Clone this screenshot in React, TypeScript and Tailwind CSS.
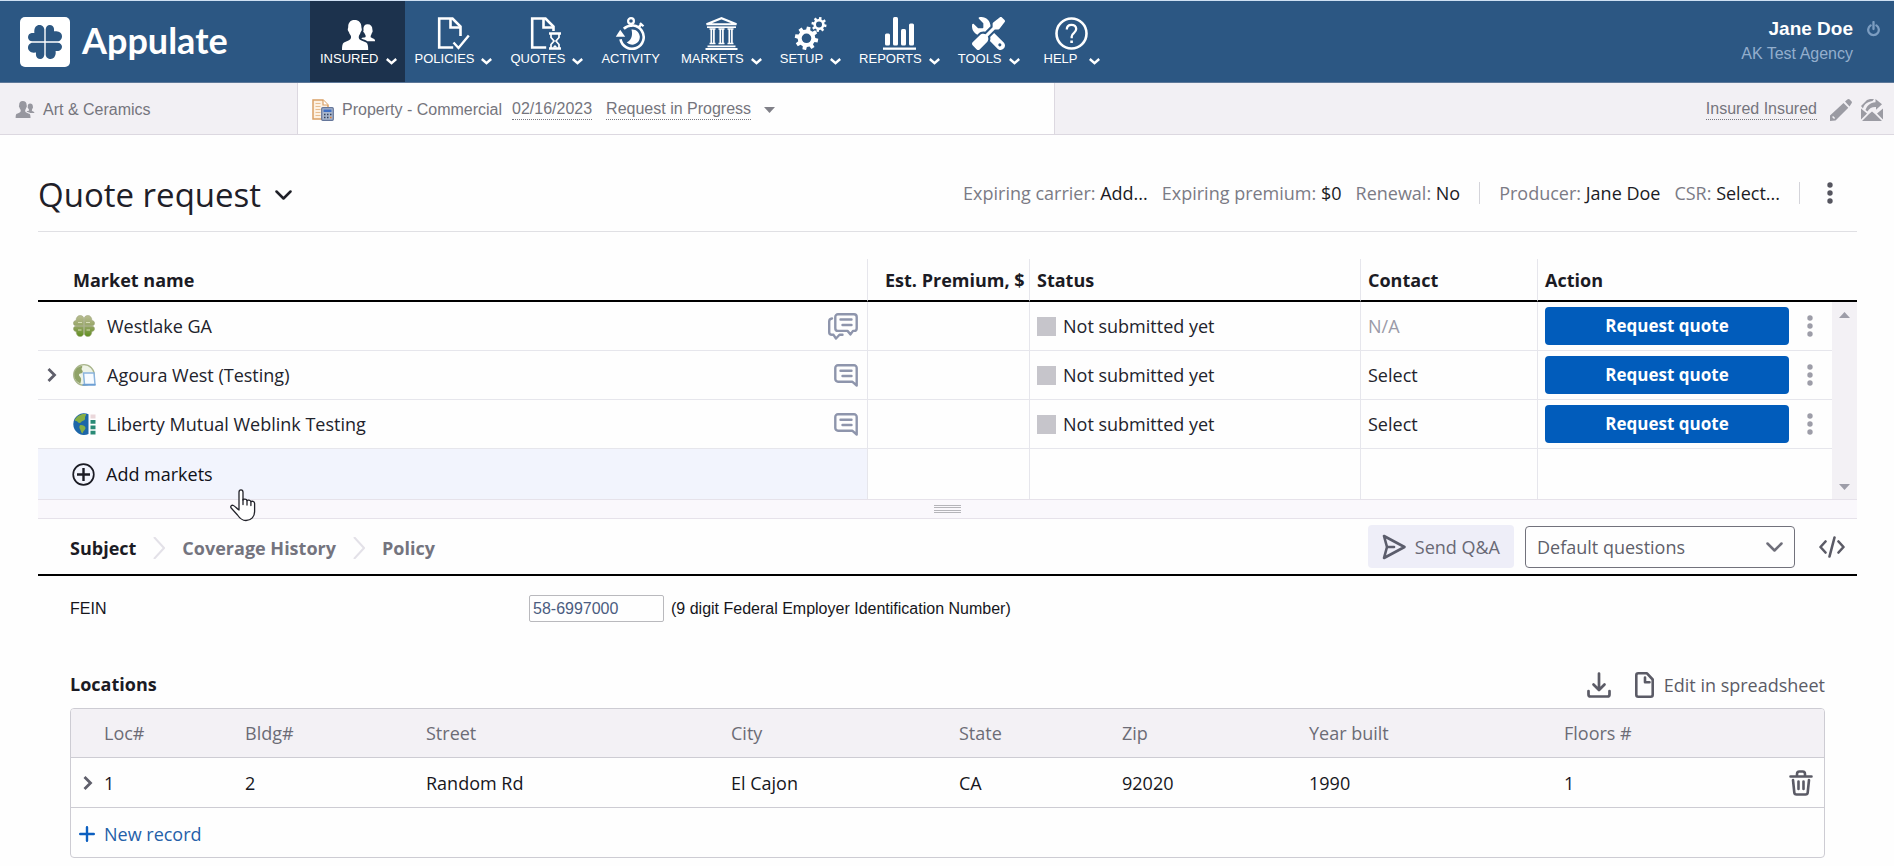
import type { ReactNode } from 'react';
import { FaScrewdriverWrench } from 'react-icons/fa6';

const SANS = "font-['Liberation_Sans',Arial,sans-serif]";
const UI = "font-['Open_Sans','Noto_Sans',sans-serif]";

/* ---------- drawing helpers ---------- */

function gearPath(cx: number, cy: number, teeth: number, outer: number, root: number, hole: number) {
  const step = (Math.PI * 2) / teeth;
  const points: string[] = [];
  for (let i = 0; i < teeth; i++) {
    const a = i * step + step / 4;
    const spots: [number, number][] = [
      [root, -0.3],
      [outer, -0.2],
      [outer, 0.2],
      [root, 0.3],
    ];
    for (const [r, k] of spots) {
      const t = a + k * step;
      points.push(`${(cx + r * Math.cos(t)).toFixed(2)} ${(cy + r * Math.sin(t)).toFixed(2)}`);
    }
  }
  return `M${points.join('L')}ZM${cx - hole} ${cy}a${hole} ${hole} 0 1 0 ${hole * 2} 0a${hole} ${hole} 0 1 0 ${-hole * 2} 0Z`;
}

function Bust({ className }: { className: string }) {
  return (
    <svg viewBox="0 0 33 30" className={className} fill="currentColor" aria-hidden="true">
      <path d="M12.500 0c4.300 0 6.900 2.700 6.900 7 0 1.200.6 1.600.4 2.900-.2 1.200-1 1.500-1.300 2.600-.4 1.700-1.300 2.600-1.600 3.500-.3 1.200-.1 2.600.5 3.200 1.800 1.500 4.600 2.100 6.800 3.300 1.700 1 2 3.500 2 7.500H0c0-4 .3-6.500 2-7.500 2.200-1.200 4.800-1.800 6.300-3.300.7-.7.900-2 .6-3.200-.3-.9-1.400-1.800-1.800-3.500-.3-1.100-1.100-1.400-1.300-2.600-.2-1.300.4-1.700.4-2.900C6.200 2.700 8.400 0 12.500 0Z" />
      <path d="M25.500 4.200c3.200 0 4.900 2 4.900 5.300 0 .9.400 1.200.2 2.100-.1.800-.6 1-.9 1.800-.3 1.200-.9 1.800-1 2.500-.2.900 0 1.300.5 1.700 1.200.8 2.500 1 3.200 1.600.6.500.6 1 .6 2h-7.600c-1.300-1.200-4.200-1.700-6-2.700-.3-.8 3.300-1 3.900-1.300.6-.5.400-1.200.2-2-.2-.7-.8-1-1.100-2.100l-1.200-1.300c.5-1 .4-2 .2-3 0-2.800 1.500-4.600 4.100-4.600Z" />
    </svg>
  );
}

function NavChevron() {
  return (
    <svg viewBox="0 0 11 7" className="mt-1 h-[7px] w-[11px]" fill="none" stroke="#fff" strokeWidth="2.400" aria-hidden="true">
      <path d="M.8 1l4.700 4.200L10.200 1" />
    </svg>
  );
}

function Chevron({ className }: { className: string }) {
  return (
    <svg viewBox="0 0 17 10" className={className} fill="none" stroke="currentColor" strokeWidth="2.500" strokeLinecap="round" strokeLinejoin="round" aria-hidden="true">
      <path d="M1.500 1.500l7 7 7-7" />
    </svg>
  );
}

function RightChevron() {
  return (
    <svg viewBox="0 0 10 14" className="h-[14px] w-[10px]" fill="none" stroke="#5f5f6b" strokeWidth="2.800" aria-hidden="true">
      <path d="M1.500 1l6 6-6 6" />
    </svg>
  );
}

function Dots({ className }: { className: string }) {
  return (
    <svg viewBox="0 0 6 22" className={className} fill="currentColor" aria-hidden="true">
      <circle cx="3" cy="3" r="2.700" />
      <circle cx="3" cy="11" r="2.700" />
      <circle cx="3" cy="19" r="2.700" />
    </svg>
  );
}

/* ---------- navigation icons ---------- */

const svgNav = 'h-[33px] w-[33px]';

const PoliciesIcon = (
  <svg viewBox="0 0 33 33" className={svgNav} fill="none" stroke="#fff">
    <path d="M23.500 19V9.500L15.500 1.500H2.200v29h14" strokeWidth="2.600" />
    <path d="M13.500 1.500v9h10" strokeWidth="2.600" />
    <path d="M16.500 25.500l5 5.500L31.800 18.500" strokeWidth="2.400" />
  </svg>
);

const QuotesIcon = (
  <svg viewBox="0 0 33 33" className={svgNav} fill="none" stroke="#fff">
    <path d="M23.500 14V9.500L15.500 1.500H2.200v29h14" strokeWidth="2.600" />
    <path d="M13.500 1.500v9h10" strokeWidth="2.600" />
    <path d="M19 16.500h12M19 31.500h12" strokeWidth="2.400" />
    <path d="M21 17v3.500l3 3.500-3 3.500V31M29 17v3.500L26 24l3 3.500V31" strokeWidth="1.700" />
    <path d="M22.500 30.500l2.500-2.500 2.500 2.500Z" fill="#fff" stroke="none" />
  </svg>
);

const ActivityIcon = (
  <svg viewBox="0 0 33 33" className={svgNav} fill="none" stroke="#fff">
    <circle cx="17" cy="4" r="2.900" strokeWidth="2.200" />
    <path d="M17 7v3M24.500 10.500l3-3.300" strokeWidth="2.600" />
    <path d="M26 6l3.500 3.300" strokeWidth="2.200" />
    <path d="M9.800 11.800a11.700 11.700 0 1 1-3.300 10.500" strokeWidth="2.600" />
    <path d="M1.800 19.800l4.400-7 5 7Z" fill="#fff" stroke="none" />
    <path d="M17.500 12.500a7.600 7.600 0 1 1-4.800 12.800c4.500-1.600 6.300-6.800 4.800-12.800Z" fill="#fff" stroke="none" />
  </svg>
);

const MarketsIcon = (
  <svg viewBox="0 0 33 33" className={svgNav} fill="none" stroke="#fff">
    <path d="M1.500 7.200L16.500 1.200l15 6Z" strokeWidth="2" />
    <path d="M2 10.200h29" strokeWidth="1.700" />
    <path d="M4.500 12h6M13.500 12h6M22.500 12h6M4.500 26.500h6M13.500 26.500h6M22.500 26.500h6" strokeWidth="1.500" />
    <path d="M6.300 12v14.500M8.900 12v14.500M15.300 12v14.500M17.900 12v14.500M24.300 12v14.500M26.900 12v14.500" strokeWidth="1.700" />
    <path d="M2.500 29.300h28M.5 32h32" strokeWidth="1.800" />
  </svg>
);

const SetupIcon = (
  <svg viewBox="0 0 33 33" className={svgNav} fill="#fff" fillRule="evenodd">
    <path d={gearPath(12.5, 21.3, 8, 11.8, 8.8, 4.8)} />
    <path d={gearPath(25, 7.5, 8, 7.6, 5.6, 3)} />
  </svg>
);

const ReportsIcon = (
  <svg viewBox="0 0 33 33" className={svgNav} fill="#fff">
    <rect x="2" y="16.500" width="5" height="12" rx="1.500" />
    <rect x="10" y="0" width="5" height="28.500" rx="1.500" />
    <rect x="18" y="12" width="5" height="16.500" rx="1.500" />
    <rect x="26" y="6.500" width="5" height="22" rx="1.500" />
    <rect x="0" y="30.500" width="33" height="2.300" />
  </svg>
);

const HelpIcon = (
  <svg viewBox="0 0 33 33" className={svgNav} fill="none" stroke="#fff">
    <circle cx="16.500" cy="16.500" r="15" strokeWidth="2.600" />
    <path d="M11.800 12.600c0-3 2-4.800 4.700-4.800s4.700 1.700 4.700 4.300c0 3.800-4.500 4-4.500 7.300v1.800" strokeWidth="2.300" />
    <path d="M15.300 23.500h2.600v2.500h-2.600Z" fill="#fff" stroke="none" />
  </svg>
);

type NavItem = { label: string; icon: ReactNode; menu: boolean; active?: boolean; wide?: boolean };

const NAV: NavItem[] = [
  { label: 'INSURED', icon: <div className="flex h-[33px] items-end"><Bust className="h-[30px] w-[33px]" /></div>, menu: true, active: true },
  { label: 'POLICIES', icon: PoliciesIcon, menu: true },
  { label: 'QUOTES', icon: QuotesIcon, menu: true },
  { label: 'ACTIVITY', icon: ActivityIcon, menu: false },
  { label: 'MARKETS', icon: MarketsIcon, menu: true },
  { label: 'SETUP', icon: SetupIcon, menu: true },
  { label: 'REPORTS', icon: ReportsIcon, menu: true },
  { label: 'TOOLS', icon: <FaScrewdriverWrench className="h-[33px] w-[33px] -scale-x-100" />, menu: true },
  { label: 'HELP', icon: HelpIcon, menu: true, wide: true },
];

/* ---------- header ---------- */

function Logo() {
  return (
    <a href="#home" className="flex w-[310px] items-center gap-3 pl-5 text-white">
      <svg viewBox="0 0 50 50" className="h-[50px] w-[50px]" aria-hidden="true">
        <rect width="50" height="50" rx="5" fill="#fff" />
        <g fill="#2c5782">
          {[0, 90, 180, 270].map((deg) => (
            <path
              key={deg}
              transform={`rotate(${deg} 25 25)`}
              d="M24.300 24.300H12.500C9.800 24.300 8 22.500 8 20.200c0-2.200 1.600-4 3.700-4.200.8-.1 2.700 0 2.700 0s-.2-1.400-.1-2.300C14.600 10.200 16.600 8 19.200 8c2.800 0 5.100 1.900 5.100 4.600Z"
            />
          ))}
        </g>
      </svg>
      <span className="pb-1 font-['Lato',sans-serif] text-[36px] leading-10 font-bold">Appulate</span>
    </a>
  );
}

function Header() {
  return (
    <header className={`flex h-[83px] border-t border-b border-t-[#cfe0f3] border-b-[#5d7899] bg-[#2c5783] ${SANS}`}>
      <Logo />
      <nav className="flex text-[13px] text-white">
        {NAV.map((item) => (
          <a
            key={item.label}
            href={`#${item.label.toLowerCase()}`}
            className={`flex flex-col items-center pt-4 ${item.wide ? 'pl-4' : 'pl-[10px]'} ${item.menu ? 'pr-2' : 'pr-[11px]'} ${item.active ? 'bg-[#1c324d]' : ''}`}
          >
            {item.icon}
            <span className={`flex items-center leading-[18px] ${item.wide ? 'gap-[11px]' : 'gap-[7px]'}`}>
              {item.label}
              {item.menu && <NavChevron />}
            </span>
          </a>
        ))}
      </nav>
      <div className="ml-auto flex gap-[14px] pt-4 pr-[14px]">
        <div className="text-right">
          <div className="text-[19px] leading-6 font-bold text-white">Jane Doe</div>
          <div className="text-base leading-[26px] text-[#93aecd]">AK Test Agency</div>
        </div>
        <button type="button" aria-label="Log out" className="mt-1 h-4">
          <svg viewBox="0 0 13 16" className="h-4 w-[13px]" fill="none" stroke="#7c9dc1" strokeWidth="2.300" strokeLinecap="round">
            <path d="M6.500 1v7M3.600 4.400a5.300 5.300 0 1 0 5.800 0" />
          </svg>
        </button>
      </div>
    </header>
  );
}

function ContextBar() {
  const dotted = 'border-b border-dotted border-[#77777f] leading-5';
  return (
    <div className={`flex h-[52px] items-stretch border-b border-[#dcd8e0] bg-[#f2f0f4] text-base text-[#75757d] ${SANS}`}>
      <a href="#insured" className="flex w-[298px] items-center gap-2 border-r border-[#dcd8e0] pt-[2px] pl-[15px]">
        <Bust className="h-[17px] w-5 text-[#97979f]" />
        Art &amp; Ceramics
      </a>
      <div className="flex w-[757px] items-center border-r border-[#dcd8e0] bg-[#fefefe] pt-[2px] pl-[14px]">
        <svg viewBox="0 0 22 22" className="mr-2 h-[22px] w-[22px]" aria-hidden="true">
          <path d="M1 1h10l5 5v14H1Z" fill="#fdf1e2" stroke="#d9a066" strokeWidth="1.500" />
          <path d="M11 1v5h5" fill="#fff" stroke="#d9a066" strokeWidth="1.200" />
          <path d="M3.500 4.500h5M3.500 7.500h5M3.500 10.500h5M3.500 13.500h5M3.500 16.500h5" stroke="#e8bd90" />
          <rect x="9.700" y="8.700" width="11.600" height="12.600" rx="1" fill="#a9b6cc" stroke="#65769a" strokeWidth="1.200" />
          <rect x="11.500" y="10.500" width="8" height="2.500" fill="#3f6fc4" />
          <path d="M12 15.500h1.500M15 15.500h1.500M18 15.500h1.500M12 18.500h1.500M15 18.500h1.500" stroke="#33405c" strokeWidth="1.600" />
          <path d="M18 18.500h1.500" stroke="#e07b2e" strokeWidth="1.600" />
        </svg>
        <span>Property - Commercial</span>
        <a href="#date" className={`ml-[10px] ${dotted}`}>02/16/2023</a>
        <a href="#status" className={`ml-[14px] ${dotted}`}>Request in Progress</a>
        <svg viewBox="0 0 11 6" className="ml-[13px] h-[6px] w-[11px]" fill="#808088" aria-hidden="true">
          <path d="M0 0h11L5.500 6Z" />
        </svg>
      </div>
      <div className="ml-auto flex items-center pt-[2px] pr-[11px]">
        <a href="#contact" className={`mr-[13px] ${dotted}`}>Insured Insured</a>
        <button type="button" aria-label="Edit insured" className="mr-[9px]">
          <svg viewBox="0 0 22 22" className="h-[22px] w-[22px]" fill="#9b9ba3">
            <path d="M0 22v-5.500L13.500 4l4.800 4.800L5.500 21.500ZM15 2.600L17.300.6c.8-.7 1.700-.7 2.400 0l1.700 1.700c.7.8.7 1.600 0 2.300L19.500 7.400Z" />
            <path d="M2.600 17.500l2 2" stroke="#f2f0f4" strokeWidth="1.500" />
          </svg>
        </button>
        <button type="button" aria-label="Share by mail">
          <svg viewBox="0 0 22 22" className="h-[22px] w-[22px]" fill="#9b9ba3">
            <path d="M0 9.500l6 5L0 20.500ZM22 9.500l-6 5 6 6ZM1 22l6.500-6.500L11 12.500l3.500 3L21 22Z" />
            <path d="M0 7L6 1l3-1h4l-1.500 2C6 2.800 3 5.500 2 9.500ZM14.500 0L21 5.200l-6 5.600V8c-4-.2-6.500 1-8.500 4.500L4.500 11C6 6.500 9 3.800 14.500 3.200Z" />
          </svg>
        </button>
      </div>
    </div>
  );
}

/* ---------- quote request ---------- */

function Fact({ name, value }: { name: string; value: string }) {
  return (
    <div className="whitespace-nowrap text-[#7b7b85]">
      {name}: <button type="button" className="text-[#1b1b24]">{value}</button>
    </div>
  );
}

function TitleRow() {
  return (
    <div className="flex h-[97px] items-center border-b border-[#e0e0e4] pt-5 text-[#1f2028]">
      <h1 className="pt-1 text-[33px] leading-10">Quote request</h1>
      <button type="button" aria-label="Switch view" className="mt-1 ml-[14px]">
        <Chevron className="h-[10px] w-[17px]" />
      </button>
      <div className="ml-auto flex items-center gap-[14px] pr-6 text-[18px] leading-6">
        <Fact name="Expiring carrier" value="Add..." />
        <Fact name="Expiring premium" value="$0" />
        <Fact name="Renewal" value="No" />
        <span className="mx-[5px] h-[22px] border-l border-[#d4d4da]" />
        <Fact name="Producer" value="Jane Doe" />
        <Fact name="CSR" value="Select..." />
        <span className="mx-[5px] h-[22px] border-l border-[#d4d4da]" />
        <button type="button" aria-label="More actions" className="ml-2">
          <Dots className="h-[22px] w-[6px] text-[#55555f]" />
        </button>
      </div>
    </div>
  );
}

function ChatIcon() {
  return (
    <svg viewBox="0 0 24 23" className="h-[23px] w-6" fill="none" stroke="#8e95ac" strokeWidth="2.400" strokeLinejoin="round" strokeLinecap="round">
      <path d="M4 1.200h16a2.700 2.700 0 0 1 2.700 2.700v17.600l-4.500-3.800H4a2.700 2.700 0 0 1-2.700-2.700V3.900A2.700 2.700 0 0 1 4 1.200Z" />
      <path d="M6.500 6.800h11M8.500 12h9" />
    </svg>
  );
}

function ChatsIcon() {
  return (
    <svg viewBox="0 0 30 27" className="h-[27px] w-[30px]" fill="none" stroke="#8e95ac" strokeWidth="2.400" strokeLinejoin="round" strokeLinecap="round">
      <path d="M10 1.200h16a2.700 2.700 0 0 1 2.700 2.700v11.300a2.700 2.700 0 0 1-2.700 2.700h-1l-2.500 3.500-3-3.500H10a2.700 2.700 0 0 1-2.700-2.700V3.900A2.700 2.700 0 0 1 10 1.200Z" />
      <path d="M12.500 6.500h11M14.500 12h9" />
      <path d="M4 5.500c-1.700.2-2.800 1.400-2.800 2.900v10.800c0 1.600 1.200 2.600 2.800 2.600h1.500L8 25.500l3.500-3.700h3" />
    </svg>
  );
}

function CloverIcon() {
  return (
    <svg viewBox="0 0 22 22" className="h-[22px] w-[22px]" aria-hidden="true">
      <defs>
        <linearGradient id="clover" x1="0" y1="0" x2="0" y2="1">
          <stop offset="0" stopColor="#b9bd92" />
          <stop offset=".5" stopColor="#96a566" />
          <stop offset="1" stopColor="#5f8f1f" />
        </linearGradient>
      </defs>
      <path d="M10.700 10.700H3C1.300 10.700.5 9.600.5 8.200c0-1.600 1-2.600 2.600-2.600C3 2.500 4.800.5 7.200.5c2 0 3.500 1.200 3.500 3.200ZM11.300 10.700H19c1.700 0 2.500-1.100 2.500-2.500 0-1.600-1-2.600-2.600-2.600 0-3.100-1.700-5.100-4.100-5.100-2 0-3.500 1.200-3.500 3.200ZM10.700 11.300H3c-1.700 0-2.500 1.100-2.500 2.500 0 1.600 1 2.600 2.600 2.600 0 3.100 1.700 5.100 4.100 5.100 2 0 3.500-1.200 3.500-3.200ZM11.300 11.300H19c1.700 0 2.500 1.100 2.500 2.500 0 1.600-1 2.600-2.600 2.600 0 3.100-1.700 5.100-4.100 5.100-2 0-3.500-1.200-3.500-3.200Z" fill="url(#clover)" stroke="#9aa277" strokeWidth=".6" />
      <path d="M5 7.500h4M13 7.500h4M5 15h3.500M13.500 15H17" stroke="#d7deb8" strokeWidth="1.200" />
    </svg>
  );
}

function GlobeWindowIcon() {
  return (
    <svg viewBox="0 0 23 22" className="h-[22px] w-[23px]" aria-hidden="true">
      <circle cx="11" cy="11" r="10.300" fill="#eef3e6" stroke="#a9b58c" strokeWidth="1.300" />
      <path d="M2.500 6C4 3.500 6.500 2.200 9 2c1 1-.5 2-.5 3s2 2 1 3.500-3 .5-3.500 2 1.500 2 2 4-.5 3.500-.5 5C3.800 18 1.200 15 1.200 11c0-2 .5-3.500 1.300-5Z" fill="#8fa267" />
      <path d="M10.500 9h10.500l1 11.500H11.500Z" fill="#f7fbff" stroke="#8bb4dd" strokeWidth="1.500" />
      <path d="M9.500 20.800h13" stroke="#6d9fd4" strokeWidth="1.800" />
    </svg>
  );
}

function GlobeFlagIcon() {
  return (
    <svg viewBox="0 0 23 22" className="h-[22px] w-[23px]" aria-hidden="true">
      <path d="M15.500 1.200V21A10.700 10.700 0 0 1 .3 11 10.700 10.700 0 0 1 15.500 1.200Z" fill="#1d66a8" />
      <path d="M5 3c2.500-1.800 5-2.300 8-2 .5 1.500-1.500 2.500-1 4s-1 2.500-2.500 3S8 10 6.500 10 4.500 8 3 8s-1.500-1-.8-2S4 3.800 5 3ZM8 12c2 0 4.500 1 4.500 3S10 18 9.500 20.500C7.500 19 8 17.500 7 16s-.8-4 1-4Z" fill="#86ae45" />
      <path d="M17.500 1.500h5v4h-5Z" fill="#ead7da" />
      <path d="M17.500 7h5v3.800h-5ZM17.500 12.400h5v3.800h-5ZM17.500 17.800h5V21.600h-5Z" fill="#2a8a76" />
    </svg>
  );
}

function ScrollTrack() {
  return (
    <div className="flex h-full flex-col items-center justify-between pt-[10px] pb-[9px]">
      <svg viewBox="0 0 11 6" className="h-[6px] w-[11px]" fill="#9d9da8"><path d="M0 6h11L5.500 0Z" /></svg>
      <svg viewBox="0 0 11 6" className="h-[6px] w-[11px]" fill="#9d9da8"><path d="M0 0h11L5.500 6Z" /></svg>
    </div>
  );
}

const MARKETS = [
  { name: 'Westlake GA', icon: <CloverIcon />, chat: <ChatsIcon />, expandable: false, contact: 'N/A' },
  { name: 'Agoura West (Testing)', icon: <GlobeWindowIcon />, chat: <ChatIcon />, expandable: true, contact: 'Select' },
  { name: 'Liberty Mutual Weblink Testing', icon: <GlobeFlagIcon />, chat: <ChatIcon />, expandable: false, contact: 'Select' },
];

function MarketsTable() {
  const head = 'h-[43px] border-b-2 border-b-black p-0 text-left font-bold';
  const cell = 'h-[49px] border-b border-b-[#e6e6ec] p-0';
  const rule = 'border-r border-r-[#e6e6ec]';
  return (
    <table className="mt-[27px] w-full table-fixed border-separate border-spacing-0 text-[18px] leading-6 text-[#22232c]">
      <colgroup>
        <col />
        <col className="w-[162px]" />
        <col className="w-[331px]" />
        <col className="w-[177px]" />
        <col className="w-[294px]" />
        <col className="w-[25px]" />
      </colgroup>
      <thead>
        <tr className="text-[#1b1b24]">
          <th className={`${head} ${rule} pl-[35px]`}>Market name</th>
          <th className={`${head} ${rule} pl-[17px] whitespace-nowrap`}>Est. Premium, $</th>
          <th className={`${head} ${rule} pl-[7px]`}>Status</th>
          <th className={`${head} ${rule} pl-[7px]`}>Contact</th>
          <th className={`${head} pl-[7px]`} colSpan={2}>Action</th>
        </tr>
      </thead>
      <tbody>
        {MARKETS.map((m, i) => (
          <tr key={m.name}>
            <td className={`${cell} ${rule}`}>
              <div className="flex items-center pr-[9px]">
                <span className="flex w-[35px] pl-[9px]">
                  {m.expandable && <button type="button" aria-label="Expand"><RightChevron /></button>}
                </span>
                <span className="w-[34px]">{m.icon}</span>
                <span className="font-medium">{m.name}</span>
                <button type="button" aria-label="Messages" className="ml-auto">{m.chat}</button>
              </div>
            </td>
            <td className={`${cell} ${rule}`} />
            <td className={`${cell} ${rule}`}>
              <div className="flex items-center gap-[7px] pl-[7px]">
                <span className="size-[19px] bg-[#c6c5cb]" />
                Not submitted yet
              </div>
            </td>
            <td className={`${cell} ${rule} pl-[7px] ${m.contact === 'N/A' ? 'text-[#9a9aa8]' : ''}`}>
              {m.contact === 'N/A' ? m.contact : <button type="button">{m.contact}</button>}
            </td>
            <td className={cell}>
              <div className="flex items-center gap-[18px] pl-[7px]">
                <button type="button" className="h-[38px] w-[244px] rounded bg-[#015cbb] text-[17px] font-bold text-white">Request quote</button>
                <button type="button" aria-label="More"><Dots className="h-[22px] w-[6px] text-[#9d9da8]" /></button>
              </div>
            </td>
            {i === 0 && (
              <td rowSpan={4} className="h-px bg-[#f3f1f5] p-0">
                <ScrollTrack />
              </td>
            )}
          </tr>
        ))}
        <tr>
          <td className={`h-[50px] bg-[#f2f4fd] p-0 ${rule}`}>
            <button type="button" className="relative flex h-full w-full items-center gap-[11px] pl-[34px] font-medium text-[#101018]">
              <svg viewBox="0 0 23 23" className="h-[23px] w-[23px]" fill="none" stroke="#1b1b24" aria-hidden="true">
                <circle cx="11.500" cy="11.500" r="10.300" strokeWidth="1.700" />
                <path d="M11.500 5v13M5 11.500h13" strokeWidth="2.400" />
              </svg>
              Add markets
              <svg viewBox="0 0 26 33" className="absolute top-10 left-[192px] z-10 h-[33px] w-[26px]" fill="#fff" stroke="#22222a" strokeWidth="1.300" strokeLinejoin="round" strokeLinecap="round" aria-hidden="true">
                <path d="M9 19.500V3.200C9 1.700 9.800.8 11 .8s2 .9 2 2.400V11c.3-1.100 3.600-1.300 4 .7.500-1 3.400-1 3.900 1 .8-.8 3.700-.6 3.700 1.800v8c0 5-3.200 9-8.600 9-4.500 0-6.500-2.500-8.500-5.500L1 18.800c-.9-2 .8-3 2.400-2.300C5.500 17.500 7 20 9 21Z" />
                <path d="M13 10.500v5M17 11.800v4.200M20.900 13v3.500" fill="none" />
              </svg>
            </button>
          </td>
          <td className={`p-0 ${rule}`} />
          <td className={`p-0 ${rule}`} />
          <td className={`p-0 ${rule}`} />
          <td className="p-0" />
        </tr>
      </tbody>
    </table>
  );
}

function Splitter() {
  return (
    <div className="flex h-5 items-center justify-center border-y border-[#e6e2ea] bg-[#faf8fc]">
      <div className="flex h-[8px] w-[27px] flex-col justify-between">
        <span className="h-px bg-[#b5b5b9]" />
        <span className="h-px bg-[#b5b5b9]" />
        <span className="h-px bg-[#b5b5b9]" />
        <span className="h-px bg-[#b5b5b9]" />
      </div>
    </div>
  );
}

/* ---------- questionnaire ---------- */

function StepArrow() {
  return (
    <svg viewBox="0 0 12 22" className="mx-[17px] h-[22px] w-3" fill="none" stroke="#e3e1e8" strokeWidth="2" aria-hidden="true">
      <path d="M1 0l10 11L1 22" />
    </svg>
  );
}

function StepBar() {
  return (
    <div className="flex h-[57px] items-center border-b-2 border-black pr-3 pl-8 text-[18px] leading-6">
      <nav className="flex items-center pt-[2px] font-bold text-[#74747e]">
        <a href="#subject" className="text-[#1b1b24]">Subject</a>
        <StepArrow />
        <a href="#coverage">Coverage History</a>
        <StepArrow />
        <a href="#policy">Policy</a>
      </nav>
      <button type="button" className="ml-auto flex h-[43px] items-center gap-[9px] rounded bg-[#eeeef8] px-[14px] text-[#696975]">
        <svg viewBox="0 0 24 26" className="h-[26px] w-6" fill="none" stroke="#5b5d6c" strokeWidth="2.600" strokeLinejoin="round" strokeLinecap="round" aria-hidden="true">
          <path d="M2 2l20.500 11L2 24l3-11Z" />
          <path d="M5.500 13h6.500" />
        </svg>
        Send Q&amp;A
      </button>
      <div className="ml-[11px] grid w-[270px] items-center">
        <select aria-label="Question set" className="col-start-1 row-start-1 h-[42px] appearance-none rounded border border-[#72727c] bg-transparent pl-[11px] text-[#5f5f6a]">
          <option>Default questions</option>
        </select>
        <span className="pointer-events-none col-start-1 row-start-1 justify-self-end pr-3">
          <Chevron className="h-[10px] w-[17px] text-[#6f6f7a]" />
        </span>
      </div>
      <button type="button" aria-label="View code" className="ml-6">
        <svg viewBox="0 0 26 22" className="h-[22px] w-[26px]" fill="none" stroke="#5b5b66" strokeWidth="2.600" strokeLinejoin="round" strokeLinecap="round">
          <path d="M6.500 5.500L1.500 11l5 5.500M19.500 5.500l5 5.500-5 5.500M15.500 1.500l-5 19" />
        </svg>
      </button>
    </div>
  );
}

function Fein() {
  return (
    <div className={`mt-[19px] flex items-center pl-8 text-base text-[#16161c] ${SANS}`}>
      <label htmlFor="fein" className="w-[459px]">FEIN</label>
      <input
        id="fein"
        type="text"
        defaultValue="58-6997000"
        className="mr-[7px] h-[27px] w-[135px] rounded-xs border border-[#b9b9bd] px-[3px] text-[#4b5c80]"
      />
      <span>(9 digit Federal Employer Identification Number)</span>
    </div>
  );
}

function Locations() {
  const head = 'h-[49px] border-b border-[#cdccd3] bg-[#f3f1f5] p-0 pl-2 text-left font-normal';
  const cell = 'h-[50px] border-b border-[#cdccd3] p-0 pl-2';
  return (
    <section className="mt-[46px] px-8 text-[18px] leading-6">
      <div className="flex h-10 items-start text-[#5b5b66]">
        <h2 className="pt-1 font-bold text-[#1b1b24]">Locations</h2>
        <button type="button" aria-label="Download" className="mt-1 ml-auto">
          <svg viewBox="0 0 24 26" className="h-[26px] w-6" fill="none" stroke="currentColor" strokeWidth="2.700" strokeLinejoin="round" strokeLinecap="round">
            <path d="M12 1.500v16M6.500 12.500l5.500 5.500 5.500-5.500M1.500 19v3.500c0 1.300.7 2 2 2h17c1.300 0 2-.7 2-2V19" />
          </svg>
        </button>
        <button type="button" className="mt-1 ml-6 flex items-center gap-[10px]">
          <svg viewBox="0 0 19 26" className="h-[26px] w-[19px]" fill="none" stroke="currentColor" strokeWidth="2.600" strokeLinejoin="round" strokeLinecap="round" aria-hidden="true">
            <path d="M3.300 1.300H12l5.700 6.200v15.200c0 1.300-.7 2-2 2H3.300c-1.300 0-2-.7-2-2V3.300c0-1.300.7-2 2-2Z" />
            <path d="M10 5.500v4.800h4.500" />
          </svg>
          Edit in spreadsheet
        </button>
      </div>
      <div className="overflow-hidden rounded-[4px] border border-[#cdccd3]">
        <table className="w-full table-fixed border-separate border-spacing-0">
          <colgroup>
            <col className="w-[166px]" />
            <col className="w-[181px]" />
            <col />
            <col className="w-[228px]" />
            <col className="w-[163px]" />
            <col className="w-[187px]" />
            <col className="w-[255px]" />
            <col className="w-[213px]" />
            <col className="w-[55px]" />
          </colgroup>
          <thead className="text-[#6c6c76]">
            <tr>
              <th className={head}><span className="pl-[25px]">Loc#</span></th>
              <th className={head}>Bldg#</th>
              <th className={head}>Street</th>
              <th className={head}>City</th>
              <th className={head}>State</th>
              <th className={head}>Zip</th>
              <th className={head}>Year built</th>
              <th className={head}>Floors #</th>
              <th className={head} aria-label="Actions" />
            </tr>
          </thead>
          <tbody className="text-[#16161c]">
            <tr>
              <td className={cell}>
                <div className="flex items-center">
                  <button type="button" aria-label="Expand location" className="mr-[11px] ml-1"><RightChevron /></button>
                  1
                </div>
              </td>
              <td className={cell}>2</td>
              <td className={cell}>Random Rd</td>
              <td className={cell}>El Cajon</td>
              <td className={cell}>CA</td>
              <td className={cell}>92020</td>
              <td className={cell}>1990</td>
              <td className={cell}>1</td>
              <td className={cell}>
                <button type="button" aria-label="Delete location" className="ml-3 block">
                  <svg viewBox="0 0 24 26" className="h-[26px] w-6" fill="none" stroke="#5b5b66" strokeWidth="2.600" strokeLinejoin="round" strokeLinecap="round">
                    <path d="M1.500 6.500h21M8 6V4.200c0-1.500.8-2.700 2.300-2.700h3.400C15.200 1.500 16 2.700 16 4.200V6M4 10l1.300 12.500c.1 1.300.8 2 2.200 2h9c1.400 0 2.100-.7 2.200-2L20 10" />
                    <path d="M9.500 11.500v7.500M14.500 11.500v7.500" />
                  </svg>
                </button>
              </td>
            </tr>
          </tbody>
        </table>
        <button type="button" className="flex h-[49px] w-full items-center gap-[9px] pt-[2px] pl-2 text-[#2460a8]">
          <svg viewBox="0 0 16 16" className="h-4 w-4" fill="none" stroke="#0c5fc0" strokeWidth="2.400" strokeLinecap="round" aria-hidden="true">
            <path d="M8 1.200v13.600M1.200 8h13.600" />
          </svg>
          New record
        </button>
      </div>
    </section>
  );
}

export default function App() {
  return (
    <div className={`min-h-screen bg-[#fefefe] ${UI}`}>
      <Header />
      <ContextBar />
      <main className="pr-[37px] pb-2 pl-[38px]">
        <TitleRow />
        <MarketsTable />
        <Splitter />
        <StepBar />
        <Fein />
        <Locations />
      </main>
    </div>
  );
}
